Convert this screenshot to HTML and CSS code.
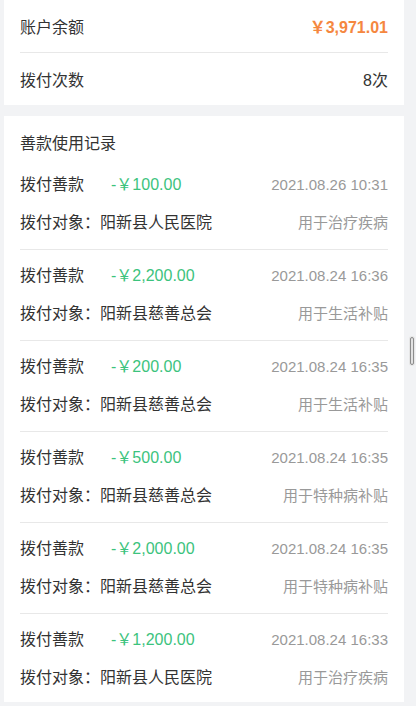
FILE: index.html
```html
<!DOCTYPE html>
<html lang="zh-CN">
<head>
    <meta charset="UTF-8">
    <meta name="viewport" content="width=device-width, initial-scale=1.0">
    <title>善款使用记录</title>
    <link rel="stylesheet" href="styles.css">
</head>
<body>
    <div class="page">
        <div class="card summary">
            <div class="summary-row">
                <span>账户余额</span>
                <span class="balance">￥3,971.01</span>
            </div>
            <div class="summary-row">
                <span>拨付次数</span>
                <span>8次</span>
            </div>
        </div>

        <div class="card records">
            <div class="records-title">善款使用记录</div>

            <div class="record">
                <div class="record-row">
                    <span class="label">拨付善款<span class="amount">-￥100.00</span></span>
                    <span class="meta">2021.08.26 10:31</span>
                </div>
                <div class="record-row">
                    <span class="label">拨付对象：阳新县人民医院</span>
                    <span class="meta">用于治疗疾病</span>
                </div>
            </div>

            <div class="record">
                <div class="record-row">
                    <span class="label">拨付善款<span class="amount">-￥2,200.00</span></span>
                    <span class="meta">2021.08.24 16:36</span>
                </div>
                <div class="record-row">
                    <span class="label">拨付对象：阳新县慈善总会</span>
                    <span class="meta">用于生活补贴</span>
                </div>
            </div>

            <div class="record">
                <div class="record-row">
                    <span class="label">拨付善款<span class="amount">-￥200.00</span></span>
                    <span class="meta">2021.08.24 16:35</span>
                </div>
                <div class="record-row">
                    <span class="label">拨付对象：阳新县慈善总会</span>
                    <span class="meta">用于生活补贴</span>
                </div>
            </div>

            <div class="record">
                <div class="record-row">
                    <span class="label">拨付善款<span class="amount">-￥500.00</span></span>
                    <span class="meta">2021.08.24 16:35</span>
                </div>
                <div class="record-row">
                    <span class="label">拨付对象：阳新县慈善总会</span>
                    <span class="meta">用于特种病补贴</span>
                </div>
            </div>

            <div class="record">
                <div class="record-row">
                    <span class="label">拨付善款<span class="amount">-￥2,000.00</span></span>
                    <span class="meta">2021.08.24 16:35</span>
                </div>
                <div class="record-row">
                    <span class="label">拨付对象：阳新县慈善总会</span>
                    <span class="meta">用于特种病补贴</span>
                </div>
            </div>

            <div class="record">
                <div class="record-row">
                    <span class="label">拨付善款<span class="amount">-￥1,200.00</span></span>
                    <span class="meta">2021.08.24 16:33</span>
                </div>
                <div class="record-row">
                    <span class="label">拨付对象：阳新县人民医院</span>
                    <span class="meta">用于治疗疾病</span>
                </div>
            </div>
        </div>

        <div class="scroll-thumb"></div>
    </div>
</body>
</html>
```

FILE: styles.css
```css
html, body {
    margin: 0;
    padding: 0;
    background-color: #f2f3f5;
}
body {
    font-family: "Liberation Sans", "Noto Sans CJK SC", sans-serif;
    font-size: 16px;
    color: #333;
}
.page {
    position: relative;
    padding: 0 12px 5px 4px;
}
.card {
    background-color: #fff;
    padding: 0 16px;
}
.summary-row {
    display: flex;
    justify-content: space-between;
    align-items: center;
    height: 52px;
}
.summary-row + .summary-row {
    border-top: 1px solid #e8e8e8;
}
.balance {
    color: #f5873f;
    font-weight: bold;
}
.records {
    margin-top: 11px;
}
.records-title {
    line-height: 24px;
    padding: 16px 0 3px;
}
.record {
    display: flex;
    flex-direction: column;
    gap: 14px;
    padding: 14px 0;
}
.record + .record {
    border-top: 1px solid #e8e8e8;
}
.record:last-child {
    padding-bottom: 12px;
}
.record-row {
    display: flex;
    justify-content: space-between;
    align-items: center;
    line-height: 24px;
}
.amount {
    color: #3cc37d;
    margin-left: 27px;
}
.meta {
    color: #999;
    font-size: 15px;
}
.scroll-thumb {
    position: absolute;
    right: 2px;
    top: 337px;
    width: 2px;
    height: 26px;
    border: 1px solid #8c8c8c;
    border-radius: 2px;
    background-color: #e2e2e2;
    box-shadow: 0 0 0 1px #e6e6e6;
}
```
